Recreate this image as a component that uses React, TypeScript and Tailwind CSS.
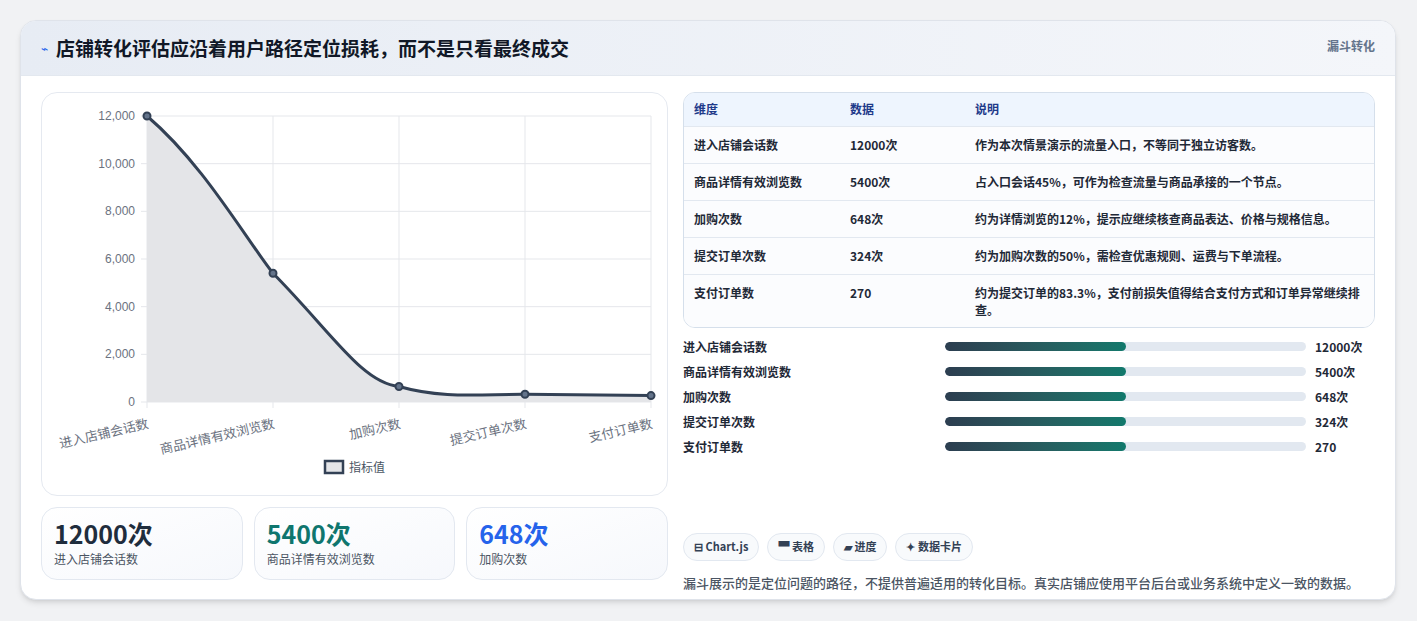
const rows = [
  { name: '进入店铺会话数', value: '12000次', note: '作为本次情景演示的流量入口，不等同于独立访客数。' },
  { name: '商品详情有效浏览数', value: '5400次', note: '占入口会话45%，可作为检查流量与商品承接的一个节点。' },
  { name: '加购次数', value: '648次', note: '约为详情浏览的12%，提示应继续核查商品表达、价格与规格信息。' },
  { name: '提交订单次数', value: '324次', note: '约为加购次数的50%，需检查优惠规则、运费与下单流程。' },
  { name: '支付订单数', value: '270', note: '约为提交订单的83.3%，支付前损失值得结合支付方式和订单异常继续排查。' },
]

const font = { fontFamily: '"Noto Sans CJK SC", "Noto Sans", sans-serif' }

function Chart() {
  const x0 = 105
  const step = 126
  const y0 = 309
  const h = 286
  const vals = [12000, 5400, 648, 324, 270]
  const pts = vals.map((v, i) => [x0 + i * step, y0 - (v / 12000) * h])
  const line =
    `M${pts[0][0]},${pts[0][1]} C160,70 200,140 ${pts[1][0]},${pts[1][1]} C290,240 320,290 ${pts[2][0]},${pts[2][1]} ` +
    `C400,306 440,301 ${pts[3][0]},${pts[3][1]} C540,302 580,302 ${pts[4][0]},${pts[4][1]}`
  const area = `${line} L609,309 L105,309 Z`
  return (
    <svg width="627" height="404" viewBox="0 0 627 404" className="block">
      {[0, 1, 2, 3, 4, 5, 6].map((i) => {
        const y = y0 - (i * h) / 6
        return (
          <g key={i}>
            <line x1={x0 - 6} x2={609} y1={y} y2={y} stroke="#e5e7eb" />
            <text x={93} y={y + 4} textAnchor="end" fontSize="12" fill="#6b7280" fontFamily="Liberation Sans, sans-serif">
              {(i * 2000).toLocaleString('en-US')}
            </text>
          </g>
        )
      })}
      {pts.map(([x], i) => (
        <line key={i} x1={x} x2={x} y1={23} y2={315} stroke="#e5e7eb" />
      ))}
      <path d={area} fill="#e4e5e8" />
      <path d={line} fill="none" stroke="#334155" strokeWidth="3" />
      {pts.map(([x, y], i) => (
        <circle key={i} cx={x} cy={y} r="3.5" fill="#64748b" stroke="#334155" strokeWidth="2" />
      ))}
      {['进入店铺会话数', '商品详情有效浏览数', '加购次数', '提交订单次数', '支付订单数'].map((t, i) => (
        <text
          key={t}
          x={pts[i][0]}
          y={325}
          textAnchor="end"
          fontSize="13"
          fill="#6b7280"
          style={font}
          transform={`rotate(-13 ${pts[i][0]} 325)`}
          dy="10"
        >
          {t}
        </text>
      ))}
      <rect x="283" y="368" width="18" height="12" fill="#e4e5e8" stroke="#334155" strokeWidth="2.5" />
      <text x="307" y="379" fontSize="12" fill="#4b5563" style={font}>指标值</text>
    </svg>
  )
}

export default function App() {
  return (
    <div className="w-[1417px] h-[621px] bg-[#f1f2f4] pt-5 pl-5" style={font}>
      <div className="w-[1376px] h-[580px] bg-white rounded-2xl border border-[#dfe3ea] shadow-md overflow-hidden">
        <div className="h-[55px] flex items-center justify-between px-5 bg-gradient-to-r from-[#e7ecf4] to-[#f4f6fa] border-b border-[#e3e8ef]">
          <div className="flex items-center gap-2">
            <span className="text-[#2563eb] text-xs">⌁</span>
            <h1 className="text-[19px] font-bold text-[#111827]">店铺转化评估应沿着用户路径定位损耗，而不是只看最终成交</h1>
          </div>
          <span className="text-[12px] font-bold text-[#64748b] self-start mt-4">漏斗转化</span>
        </div>
        <div className="flex gap-[15px] px-5 pt-4">
          <div className="w-[627px] flex flex-col gap-[11px]">
            <div className="h-[404px] rounded-2xl border border-[#e5e9f0]">
              <Chart />
            </div>
            <div className="flex gap-[11px]">
              {[
                { v: '12000次', l: '进入店铺会话数', c: 'text-[#1f2d3d]' },
                { v: '5400次', l: '商品详情有效浏览数', c: 'text-[#0f766e]' },
                { v: '648次', l: '加购次数', c: 'text-[#2563eb]' },
              ].map((s) => (
                <div key={s.l} className="w-[202px] h-[73px] rounded-2xl border border-[#e3e8f0] bg-gradient-to-br from-white to-[#f6f8fc] px-3 pt-2">
                  <div className={`text-[25px] font-bold leading-[34px] ${s.c}`}>{s.v}</div>
                  <div className="text-[12px] text-[#4b5563]">{s.l}</div>
                </div>
              ))}
            </div>
          </div>
          <div className="w-[696px] flex flex-col">
            <div className="rounded-xl border border-[#d5dfeb] overflow-hidden">
              <table className="w-full text-[12px]">
                <thead className="bg-[#eef5fe] text-[#1e3a8a]">
                  <tr className="h-[33px]">
                    <th className="text-left font-bold pl-[10px] w-[166px]">维度</th>
                    <th className="text-left font-bold w-[125px]">数据</th>
                    <th className="text-left font-bold">说明</th>
                  </tr>
                </thead>
                <tbody className="text-[#1f2937] font-semibold">
                  {rows.map((r) => (
                    <tr key={r.name} className="border-t border-[#e2e8f0] bg-[#fbfcfe] align-top">
                      <td className="pl-[10px] py-[9px]">{r.name}</td>
                      <td className="py-[9px]">{r.value}</td>
                      <td className="py-[9px] pr-2 leading-[17px]">{r.note}</td>
                    </tr>
                  ))}
                </tbody>
              </table>
            </div>
            <div className="mt-[10px] flex flex-col gap-[7px]">
              {rows.map((r) => (
                <div key={r.name} className="flex items-center h-[18px] text-[12px] font-semibold text-[#1f2937]">
                  <span className="w-[262px]">{r.name}</span>
                  <div className="w-[361px] h-[9px] rounded-full bg-[#e2e8f0] overflow-hidden">
                    <div className="w-1/2 h-full rounded-full bg-gradient-to-r from-[#2c3e50] to-[#11796c]" />
                  </div>
                  <span className="ml-[9px] font-bold">{r.value}</span>
                </div>
              ))}
            </div>
            <div className="mt-[77px] flex gap-[8px]">
              {['⊟ Chart.js', '▀ 表格', '▰ 进度', '✦ 数据卡片'].map((c) => (
                <span key={c} className="h-[28px] px-[10px] flex items-center rounded-full border border-[#e2e8f0] bg-[#f8fafc] text-[11px] font-bold text-[#334155]">
                  {c}
                </span>
              ))}
            </div>
            <p className="mt-[12px] text-[13px] text-[#4b5563] font-medium">
              漏斗展示的是定位问题的路径，不提供普遍适用的转化目标。真实店铺应使用平台后台或业务系统中定义一致的数据。
            </p>
          </div>
        </div>
      </div>
    </div>
  )
}
